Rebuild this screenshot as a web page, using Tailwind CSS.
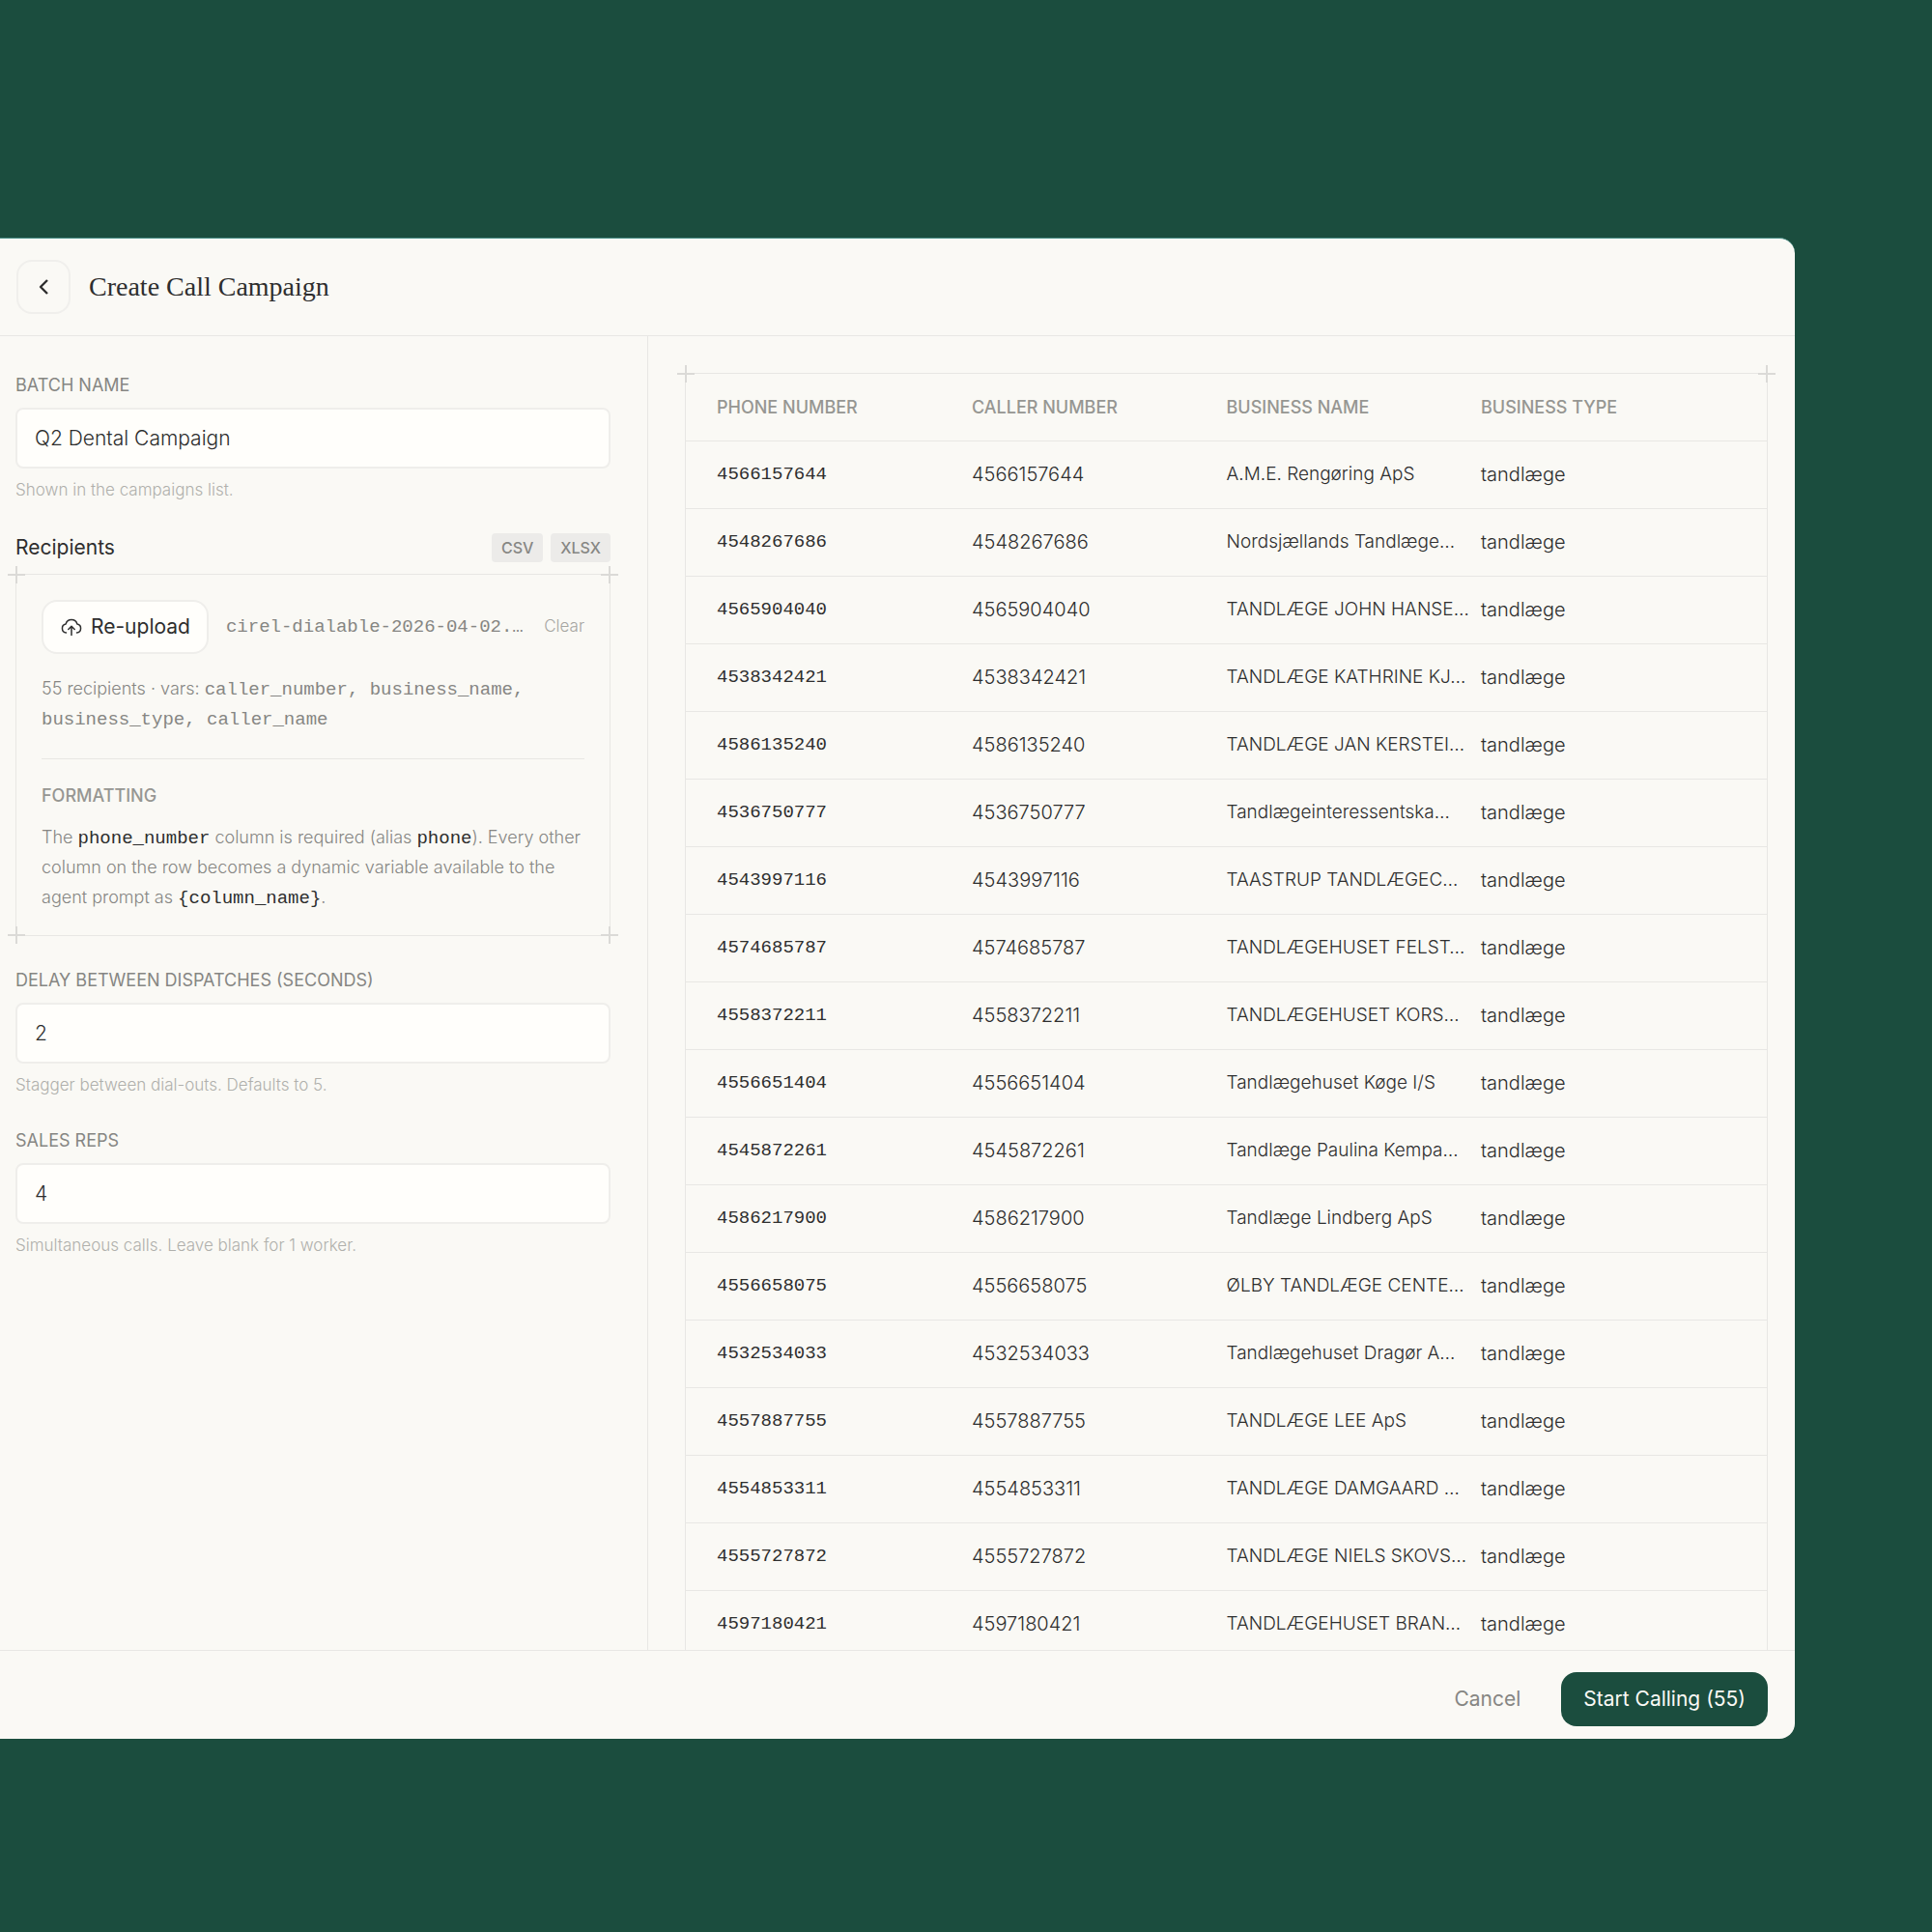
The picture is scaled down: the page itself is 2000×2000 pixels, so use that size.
<!DOCTYPE html>
<html lang="en">
<head>
  <meta charset="UTF-8" />
  <meta name="viewport" content="width=device-width, initial-scale=1.0" />
  <title>Create Call Campaign</title>
  <script src="https://cdn.jsdelivr.net/npm/@tailwindcss/browser@4"></script>
</head>

<body class="flex h-screen flex-col bg-[#1b4d3e] pt-[246px] pr-[142px] pb-[200px] font-['Inter',sans-serif] text-[#2e2e2e]">
  <div class="flex min-h-0 flex-1 flex-col overflow-hidden rounded-r-2xl border-t border-[#4a8f88] bg-[#faf9f5]">

    <!-- Header -->
    <header class="flex h-[101px] shrink-0 items-center gap-[19px] border-b border-[#e8e7e4] pl-[17px]">
      <button type="button" aria-label="Back" class="flex size-14 items-center justify-center rounded-2xl border-2 border-[#f0efec]">
        <svg class="size-5" viewBox="0 0 20 20" fill="none" stroke="currentColor" stroke-width="2.4" stroke-linejoin="round"><path d="M14 3 7 10l7 7" /></svg>
      </button>
      <h1 class="font-['Liberation_Serif',serif] text-[28px]">Create Call Campaign</h1>
    </header>

    <div class="flex min-h-0 flex-1">
      <!-- Campaign form -->
      <form class="w-[671px] shrink-0 border-r border-[#e8e7e4] pt-[39px] pr-[38px] pl-4">
        <div>
          <label for="batch" class="block text-[18px] leading-6 text-[#868683]">BATCH NAME</label>
          <input id="batch" type="text" value="Q2 Dental Campaign" class="mt-[11px] h-[63px] w-full rounded-lg border-2 border-[#efeeeb] bg-[#fffefb] px-[18px] text-[21px] font-light" />
          <p class="mt-2.5 text-[17px] leading-6 font-light text-[#b0b0ac]">Shown in the campaigns list.</p>
        </div>

        <div class="mt-8 flex items-center justify-between">
          <h2 class="text-[21px] leading-8">Recipients</h2>
          <div class="flex gap-2 text-base leading-[30px] font-medium text-[#868683]">
            <span class="rounded bg-[#ecebe9] px-2.5">CSV</span>
            <span class="rounded bg-[#ecebe9] px-2.5">XLSX</span>
          </div>
        </div>

        <section class="relative mt-[11px] border border-[#e8e7e4] px-[26px] pt-[26px] pb-6">
          <div class="flex items-center">
            <button type="button" class="flex h-14 shrink-0 items-center gap-2 rounded-2xl border-2 border-[#efeeeb] bg-[#fffefb] px-[17px] text-[21px]">
              <svg class="size-6" viewBox="0 0 24 24" fill="none" stroke="currentColor" stroke-width="1.5" stroke-linecap="round" stroke-linejoin="round"><path d="M6.500 18a4.500 4.500 0 0 1-.4-8.900 6.100 6.100 0 0 1 11.800 0A4.500 4.500 0 0 1 17.500 18M12 20.500v-9M8.800 14.500l3.200-3.200 3.200 3.200" /></svg>
              Re-upload
            </button>
            <span class="ml-[18px] font-['Liberation_Mono',monospace] text-[19px] whitespace-nowrap text-[#868683]">cirel-dialable-2026-04-02.…</span>
            <button type="button" class="ml-auto text-[17px] font-light text-[#a6a6a2]">Clear</button>
          </div>
          <p class="mt-5 text-[18px] leading-[31px] font-light text-[#868683]">55 recipients · vars: <span class="font-['Liberation_Mono',monospace] text-[19px] leading-5 font-normal">caller_number, business_name, business_type, caller_name</span></p>
          <hr class="mt-[26px] border-[#e8e7e4]" />
          <h3 class="mt-[26px] text-[18px] leading-6 font-medium text-[#969692]">FORMATTING</h3>
          <p class="mt-[15px] text-[18px] leading-[31px] font-light text-[#868683]">The <code class="font-['Liberation_Mono',monospace] text-[19px] leading-5 font-normal text-[#2e2e2e]">phone_number</code> column is required (alias <code class="font-['Liberation_Mono',monospace] text-[19px] leading-5 font-normal text-[#2e2e2e]">phone</code>). Every other column on the row becomes a dynamic variable available to the agent prompt as <code class="font-['Liberation_Mono',monospace] text-[19px] leading-5 font-normal text-[#2e2e2e]">{column_name}</code>.</p>

          <!-- Corner ticks -->
          <svg class="absolute -top-2.5 -left-2.5 size-5" stroke="#dbdad7" stroke-width="2"><path d="M10 1v18M1 10h18" /></svg>
          <svg class="absolute -top-2.5 -right-2.5 size-5" stroke="#dbdad7" stroke-width="2"><path d="M10 1v18M1 10h18" /></svg>
          <svg class="absolute -bottom-2.5 -left-2.5 size-5" stroke="#dbdad7" stroke-width="2"><path d="M10 1v18M1 10h18" /></svg>
          <svg class="absolute -right-2.5 -bottom-2.5 size-5" stroke="#dbdad7" stroke-width="2"><path d="M10 1v18M1 10h18" /></svg>
        </section>

        <div class="mt-[34px]">
          <label for="delay" class="block text-[18px] leading-6 text-[#868683]">DELAY BETWEEN DISPATCHES (SECONDS)</label>
          <input id="delay" type="text" inputmode="numeric" value="2" class="mt-[11px] h-[63px] w-full rounded-lg border-2 border-[#efeeeb] bg-[#fffefb] px-[18px] text-[21px] font-light" />
          <p class="mt-2.5 text-[17px] leading-6 font-light text-[#b0b0ac]">Stagger between dial-outs. Defaults to 5.</p>
        </div>

        <div class="mt-[34px]">
          <label for="reps" class="block text-[18px] leading-6 text-[#868683]">SALES REPS</label>
          <input id="reps" type="text" inputmode="numeric" value="4" class="mt-[11px] h-[63px] w-full rounded-lg border-2 border-[#efeeeb] bg-[#fffefb] px-[18px] text-[21px] font-light" />
          <p class="mt-2.5 text-[17px] leading-6 font-light text-[#b0b0ac]">Simultaneous calls. Leave blank for 1 worker.</p>
        </div>
      </form>

      <!-- Recipient preview -->
      <main class="min-w-0 flex-1 overflow-hidden pt-[38px] pr-7 pl-[38px]">
        <div class="relative border border-[#e8e7e4]">
          <table class="w-full table-fixed border-collapse text-left">
            <colgroup>
              <col class="w-[296px]" />
              <col />
              <col />
              <col class="w-[296px]" />
            </colgroup>
            <thead>
              <tr class="h-[69px] border-b border-[#e8e7e4] text-[18px] text-[#969692]">
                <th class="pl-8 font-medium">PHONE NUMBER</th>
                <th class="font-medium">CALLER NUMBER</th>
                <th class="font-medium">BUSINESS NAME</th>
                <th class="font-medium">BUSINESS TYPE</th>
              </tr>
            </thead>
            <tbody id="rows"></tbody>
          </table>
          <svg class="absolute -top-2.5 -left-2.5 size-5" stroke="#dbdad7" stroke-width="2"><path d="M10 1v18M1 10h18" /></svg>
          <svg class="absolute -top-2.5 -right-2.5 size-5" stroke="#dbdad7" stroke-width="2"><path d="M10 1v18M1 10h18" /></svg>
        </div>
      </main>
    </div>

    <!-- Footer -->
    <footer class="flex shrink-0 items-center justify-end gap-[42px] border-t border-[#e8e7e4] pt-[22px] pr-7 pb-[13px]">
      <button type="button" class="text-[21px] text-[#868683]">Cancel</button>
      <button type="button" class="h-14 rounded-2xl bg-[#1b4d3e] px-[23px] text-[21px] text-[#faf9f5]">Start Calling (55)</button>
    </footer>
  </div>

  <script>
    const recipients = [
      ["4566157644", "A.M.E. Rengøring ApS"],
      ["4548267686", "Nordsjællands Tandlæge…"],
      ["4565904040", "TANDLÆGE JOHN HANSE…"],
      ["4538342421", "TANDLÆGE KATHRINE KJ…"],
      ["4586135240", "TANDLÆGE JAN KERSTEI…"],
      ["4536750777", "Tandlægeinteressentska…"],
      ["4543997116", "TAASTRUP TANDLÆGEC…"],
      ["4574685787", "TANDLÆGEHUSET FELST…"],
      ["4558372211", "TANDLÆGEHUSET KORS…"],
      ["4556651404", "Tandlægehuset Køge I/S"],
      ["4545872261", "Tandlæge Paulina Kempa…"],
      ["4586217900", "Tandlæge Lindberg ApS"],
      ["4556658075", "ØLBY TANDLÆGE CENTE…"],
      ["4532534033", "Tandlægehuset Dragør A…"],
      ["4557887755", "TANDLÆGE LEE ApS"],
      ["4554853311", "TANDLÆGE DAMGAARD …"],
      ["4555727872", "TANDLÆGE NIELS SKOVS…"],
      ["4597180421", "TANDLÆGEHUSET BRAN…"]
    ];

    document.getElementById("rows").innerHTML = recipients.map(([phone, name]) => `
      <tr class="h-[70px] border-b border-[#e8e7e4] text-[20px] font-light">
        <td class="pl-8 font-['Liberation_Mono',monospace] text-[19px] font-normal">${phone}</td>
        <td>${phone}</td>
        <td class="text-[19px] whitespace-nowrap">${name}</td>
        <td>tandlæge</td>
      </tr>`).join("");
  </script>
</body>
</html>
